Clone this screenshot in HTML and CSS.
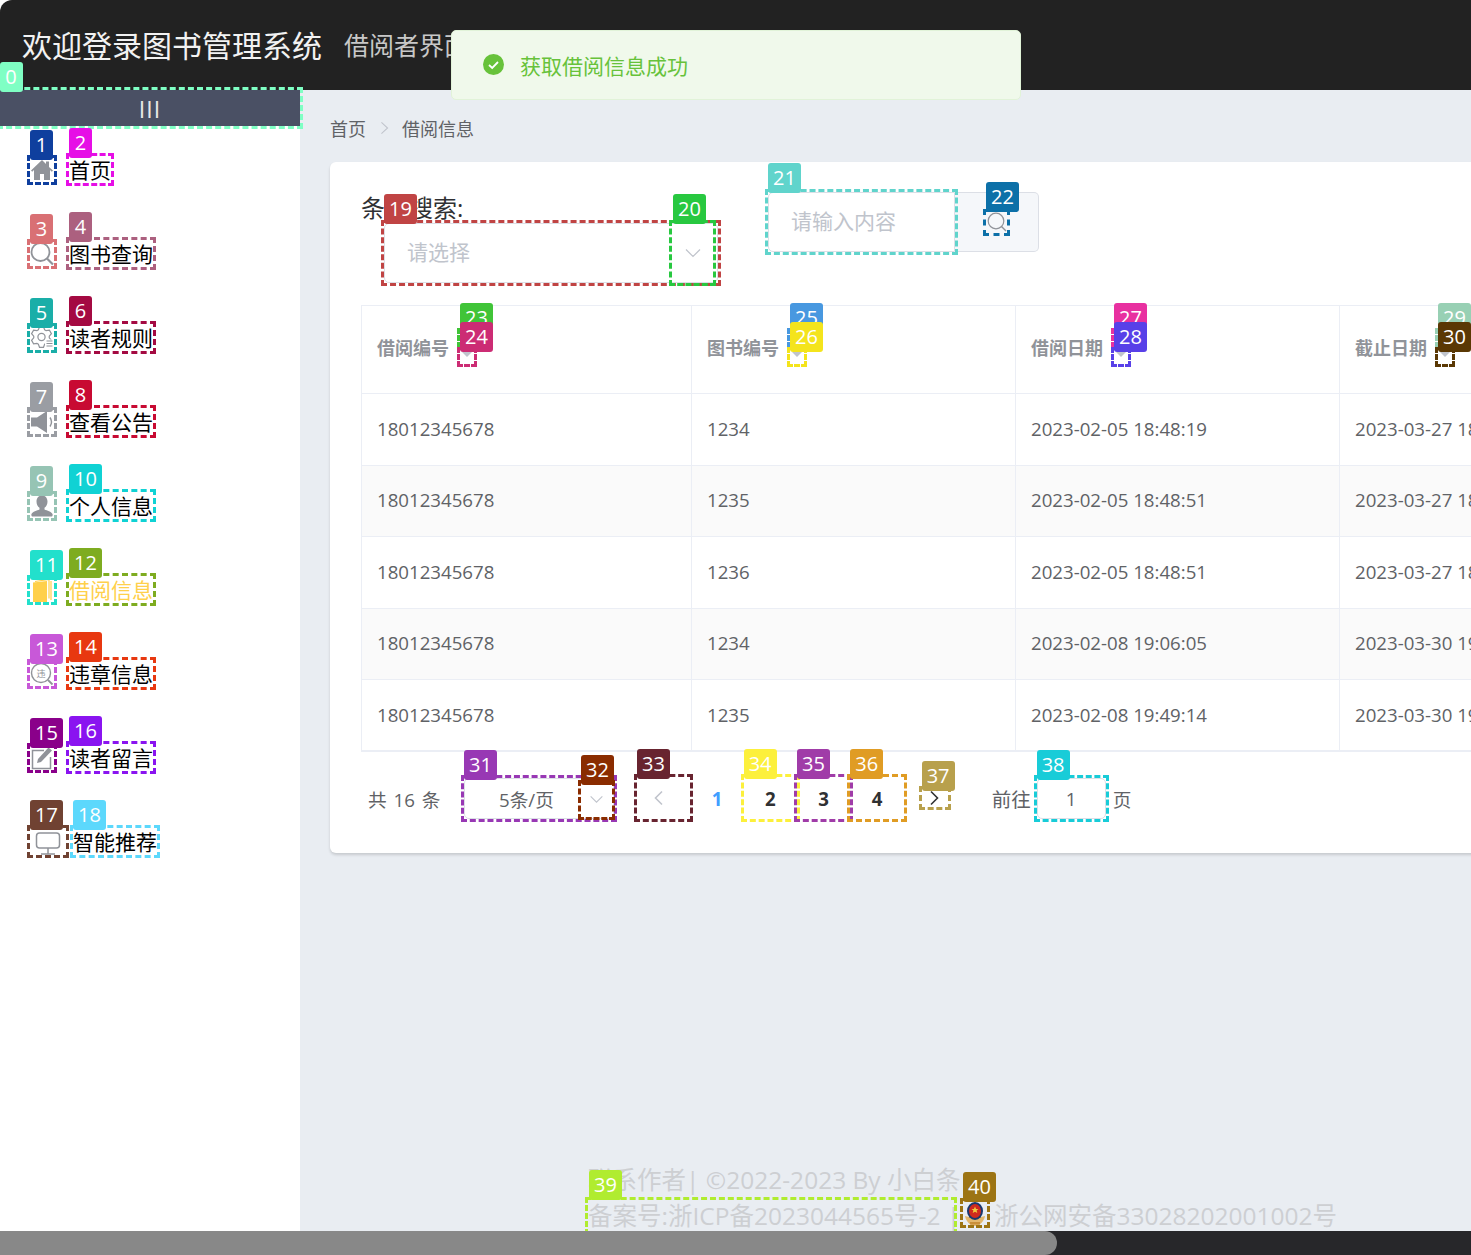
FILE: index.html
```html
<!DOCTYPE html>
<html lang="zh-CN">
<head>
<meta charset="utf-8">
<title>借阅信息</title>
<link rel="stylesheet" href="styles.css">
</head>
<body>
<div class="app">
  <header class="topbar">
    <h1 class="title">欢迎登录图书管理系统</h1>
    <span class="subtitle">借阅者界面</span>
  </header>
  <div class="toast">
    <svg class="toast-icon" viewBox="0 0 21 21"><circle cx="10.5" cy="10.5" r="10.5" fill="#67c23a"/><path d="M6 11l3.2 3L15 8" fill="none" stroke="#fff" stroke-width="1.8"/></svg>
    <span>获取借阅信息成功</span>
  </div>
  <div class="content">
    <aside class="sidebar">
      <div class="toggle ann a0"><i class="tag">0</i>III</div>
      <nav class="menu">
        <a class="item">
          <span class="ico ann a1"><i class="tag">1</i>
            <svg viewBox="0 0 24 24"><path d="M12 2L1 12.5l1.200 1.200L4 12v10h6v-6h4v6h6V12l1.800 1.700 1.200-1.200L19 9V3.500h-3V6z" fill="#909399"/></svg></span>
          <span class="txt ann a2"><i class="tag">2</i>首页</span>
        </a>
        <a class="item">
          <span class="ico ann a3"><i class="tag">3</i>
            <svg viewBox="0 0 24 24"><circle cx="10.500" cy="10" r="9" fill="none" stroke="#909399" stroke-width="1.800"/><path d="M17 16.500l6 6" stroke="#909399" stroke-width="2.200"/></svg></span>
          <span class="txt ann a4"><i class="tag">4</i>图书查询</span>
        </a>
        <a class="item">
          <span class="ico ann a5"><i class="tag">5</i>
            <svg viewBox="0 0 24 24"><path d="M8.330 3.870L9.500.690h4l1.170 3.180 1.410.820 3.340-.580 2.010 3.470-2.170 2.600v1.640l2.170 2.600-2.010 3.470-3.340-.580-1.410.820-1.170 3.180h-4l-1.170-3.180-1.410-.820-3.340.580-2.010-3.470 2.170-2.600v-1.640l-2.170-2.600 2.010-3.470 3.340.580z" fill="none" stroke="#909399" stroke-width="1.200"/><circle cx="11.500" cy="11" r="3.600" fill="none" stroke="#909399" stroke-width="1.200"/><path d="M15 13.500h9v10h-9z" fill="#fff"/><path d="M16.500 15h6M16.500 17.500h6M16.500 20h6" stroke="#909399" stroke-width="1.200"/></svg></span>
          <span class="txt ann a6"><i class="tag">6</i>读者规则</span>
        </a>
        <a class="item">
          <span class="ico ann a7"><i class="tag">7</i>
            <svg viewBox="0 0 24 24"><path d="M1 7.500h6L17 1v22L7 16.500H1z" fill="#909399"/><path d="M20 7.500c2 3 2 6 0 9" fill="none" stroke="#909399" stroke-width="1.400"/></svg></span>
          <span class="txt ann a8"><i class="tag">8</i>查看公告</span>
        </a>
        <a class="item">
          <span class="ico ann a9"><i class="tag">9</i>
            <svg viewBox="0 0 24 24"><path d="M12 1.500c3.600 0 5.500 2.800 5.500 6 0 2.600-1.200 5-3 6.300v1.700c2.500 1 7 2 8 4.500.3 1 .2 2-.5 2.500H2c-.7-.5-.8-1.500-.5-2.500 1-2.500 5.500-3.500 8-4.500v-1.700c-1.800-1.300-3-3.700-3-6.300 0-3.200 1.900-6 5.500-6z" fill="#909399"/></svg></span>
          <span class="txt ann a10"><i class="tag">10</i>个人信息</span>
        </a>
        <a class="item">
          <span class="ico ann a11"><i class="tag">11</i>
            <svg viewBox="0 0 24 24"><path d="M3 4.500L17 3v21H3z" fill="#ffd04b"/><path d="M5 3.500L19 1.500v19M21 3v19" fill="none" stroke="#ffd04b" stroke-width="1.200"/></svg></span>
          <span class="txt active ann a12"><i class="tag">12</i>借阅信息</span>
        </a>
        <a class="item">
          <span class="ico ann a13"><i class="tag">13</i>
            <svg viewBox="0 0 24 24"><circle cx="11" cy="11" r="9.500" fill="none" stroke="#909399" stroke-width="1.400"/><path d="M18 18l4.500 4.500" stroke="#909399" stroke-width="1.800"/><text class="mini" x="11" y="14.500" text-anchor="middle">违</text></svg></span>
          <span class="txt ann a14"><i class="tag">14</i>违章信息</span>
        </a>
        <a class="item">
          <span class="ico ann a15"><i class="tag">15</i>
            <svg viewBox="0 0 24 24"><path d="M14 4.500H2.500v18h18V11" fill="none" stroke="#909399" stroke-width="1.500"/><path d="M8 13L18.500 1.500l3.500 3L11 16l-4 1z" fill="#909399"/></svg></span>
          <span class="txt ann a16"><i class="tag">16</i>读者留言</span>
        </a>
        <a class="item last">
          <span class="ico wide ann a17"><i class="tag">17</i>
            <svg viewBox="0 0 36 27"><rect x="6.500" y="5" width="23" height="15" rx="3" fill="none" stroke="#909399" stroke-width="1.500"/><path d="M18 20v5.500M11 26h14" stroke="#909399" stroke-width="1.500"/></svg></span>
          <span class="txt ann a18"><i class="tag">18</i>智能推荐</span>
        </a>
      </nav>
    </aside>
    <main class="main">
      <div class="crumbs">
        <span>首页</span>
        <svg class="crumb-sep" viewBox="0 0 10 16"><path d="M1.500 1.500L8.500 8l-7 6.500" fill="none" stroke="#c0c4cc" stroke-width="1.200"/></svg>
        <span>借阅信息</span>
      </div>
      <section class="card">
        <div class="toolbar">
          <div class="cond">
            <span class="cond-label">条件搜索:</span>
            <div class="select ann a19"><i class="tag">19</i>
              <span class="placeholder">请选择</span>
              <span class="select-arrow ann a20"><i class="tag">20</i>
                <svg viewBox="0 0 16 10"><path d="M1 1.500l7 7 7-7" fill="none" stroke="#c0c4cc" stroke-width="1.200"/></svg></span>
            </div>
          </div>
          <div class="search">
            <div class="search-input ann a21"><i class="tag">21</i><span class="placeholder">请输入内容</span></div>
            <div class="search-btn">
              <span class="search-ico ann a22"><i class="tag">22</i>
                <svg viewBox="0 0 21 21"><circle cx="10" cy="9" r="7.800" fill="none" stroke="#909399" stroke-width="1.200"/><path d="M15.500 14.500l4.500 4.500" stroke="#909399" stroke-width="1.400"/></svg></span>
            </div>
          </div>
        </div>
        <table class="grid">
          <colgroup><col class="c1"><col class="c2"><col class="c3"><col class="c4"></colgroup>
          <thead>
            <tr>
              <th><div class="th"><span>借阅编号</span><span class="sorter"><span class="car ann a23"><i class="tag">23</i><b class="up"></b></span><span class="car ann a24"><i class="tag">24</i><b class="down"></b></span></span></div></th>
              <th><div class="th"><span>图书编号</span><span class="sorter"><span class="car ann a25"><i class="tag">25</i><b class="up"></b></span><span class="car ann a26"><i class="tag">26</i><b class="down"></b></span></span></div></th>
              <th><div class="th"><span>借阅日期</span><span class="sorter"><span class="car ann a27"><i class="tag">27</i><b class="up"></b></span><span class="car ann a28"><i class="tag">28</i><b class="down"></b></span></span></div></th>
              <th><div class="th"><span>截止日期</span><span class="sorter"><span class="car ann a29"><i class="tag">29</i><b class="up"></b></span><span class="car ann a30"><i class="tag">30</i><b class="down"></b></span></span></div></th>
            </tr>
          </thead>
          <tbody>
            <tr><td>18012345678</td><td>1234</td><td>2023-02-05 18:48:19</td><td>2023-03-27 18:48:19</td></tr>
            <tr><td>18012345678</td><td>1235</td><td>2023-02-05 18:48:51</td><td>2023-03-27 18:48:51</td></tr>
            <tr><td>18012345678</td><td>1236</td><td>2023-02-05 18:48:51</td><td>2023-03-27 18:48:51</td></tr>
            <tr><td>18012345678</td><td>1234</td><td>2023-02-08 19:06:05</td><td>2023-03-30 19:06:05</td></tr>
            <tr><td>18012345678</td><td>1235</td><td>2023-02-08 19:49:14</td><td>2023-03-30 19:49:14</td></tr>
          </tbody>
        </table>
        <div class="pager">
          <span class="total">共 16 条</span>
          <div class="size ann a31"><i class="tag">31</i>
            <span class="size-val">5条/页</span>
            <span class="size-arrow ann a32"><i class="tag">32</i>
              <svg viewBox="0 0 16 10"><path d="M1.500 1.500L8 8l6.500-6.500" fill="none" stroke="#c0c4cc" stroke-width="1.200"/></svg></span>
          </div>
          <span class="pg prev ann a33"><i class="tag">33</i>
            <svg viewBox="0 0 10 16"><path d="M8.500 1.500L2 8l6.500 6.500" fill="none" stroke="#c0c4cc" stroke-width="1.600"/></svg></span>
          <span class="pg current">1</span>
          <span class="pg ann a34"><i class="tag">34</i>2</span>
          <span class="pg ann a35"><i class="tag">35</i>3</span>
          <span class="pg ann a36"><i class="tag">36</i>4</span>
          <span class="next ann a37"><i class="tag">37</i>
            <svg viewBox="0 0 10 16"><path d="M1.500 1.500L8 8l-6.500 6.500" fill="none" stroke="#303133" stroke-width="1.600"/></svg></span>
          <span class="goto">前往</span>
          <span class="jump ann a38"><i class="tag">38</i>1</span>
          <span class="page-word">页</span>
        </div>
      </section>
      <footer class="foot">
        <div class="foot-line">联系作者| ©2022-2023 By 小白条</div>
        <div class="foot-line">
          <span class="record ann a39"><i class="tag">39</i>备案号:浙ICP备2023044565号-2 |</span>
          <span class="emblem ann a40"><i class="tag">40</i>
            <svg viewBox="0 0 24 26"><path d="M2 15c1 6 6 10 10 10s9-4 10-10l-4 1H6z" fill="#e3b76c"/><ellipse cx="12" cy="10" rx="8" ry="9" fill="#18386e"/><ellipse cx="12" cy="10" rx="6" ry="7" fill="#cf2a1e"/><path d="M12 5.500l1.100 2.500h2.400l-1.900 1.600.7 2.500-2.300-1.400-2.300 1.400.7-2.500L8.500 8h2.400z" fill="#f1c93e"/><path d="M7 21h10v2.500H7z" fill="#c98f3a"/></svg></span>
          <span class="police">浙公网安备33028202001002号</span>
        </div>
      </footer>
    </main>
  </div>
  <div class="hscroll"><div class="hthumb"></div></div>
</div>
</body>
</html>
```
FILE: styles.css
```css
* { box-sizing: border-box; }
html, body { margin: 0; padding: 0; height: 100%; overflow: hidden; background: #fff; }
body { font-family: "Open Sans", "Noto Sans CJK SC", sans-serif; color: #606266; }

.app { height: 1255px; display: flex; flex-direction: column; position: relative; overflow: hidden; border-top-left-radius: 12px; }

/* annotations */
.ann { position: relative; outline: 3px dashed var(--c); }
.tag { position: absolute; left: 0; top: -28px; height: 30px; min-width: 23px; padding: 0 5px; border-radius: 3px; background: var(--c); color: #fff; font: normal 20px/30px "Open Sans", sans-serif; text-align: center; z-index: 5; }
.a0{--c:#7fffc4}.a1{--c:#0f3f9e}.a2{--c:#e60ee6}.a3{--c:#d97074}.a4{--c:#ac607f}.a5{--c:#1aaea8}.a6{--c:#a40a42}.a7{--c:#9a9da3}.a8{--c:#c80a32}.a9{--c:#96c4b4}
.a10{--c:#10d2d4}.a11{--c:#22e0cc}.a12{--c:#7eac20}.a13{--c:#c858d8}.a14{--c:#e83810}.a15{--c:#8a008a}.a16{--c:#8a14f0}.a17{--c:#704232}.a18{--c:#5cd8fc}.a19{--c:#c04444}
.a20{--c:#28c840}.a21{--c:#60d4cc}.a22{--c:#0c70a8}.a23{--c:#40c438}.a24{--c:#cc2c74}.a25{--c:#4898e0}.a26{--c:#f4e41c}.a27{--c:#e830a0}.a28{--c:#5840e8}.a29{--c:#98d0b4}
.a30{--c:#5a3804}.a31{--c:#9838b4}.a32{--c:#8a2c00}.a33{--c:#682430}.a34{--c:#fcf03c}.a35{--c:#a03ca8}.a36{--c:#e09c24}.a37{--c:#b8a04c}.a38{--c:#18ccd8}.a39{--c:#b0ec30}.a40{--c:#9c7414}

/* header */
.topbar { flex: 0 0 90px; background: #222; display: flex; align-items: center; padding: 0 0 2px 22px; gap: 22px; white-space: nowrap; }
.title { margin: 0; font-size: 30px; font-weight: 400; color: #f2f2f2; }
.subtitle { font-size: 25px; color: #c8c8c8; }

.toast { position: absolute; left: 451px; top: 30px; width: 570px; height: 70px; display: flex; align-items: center; gap: 16px; padding: 0 0 1px 31px; background: #f0f9eb; border: 1px solid #e1f3d8; border-radius: 5px; color: #67c23a; font-size: 21px; z-index: 3; }
.toast-icon { width: 21px; height: 21px; }

.content { flex: 1; display: flex; min-height: 0; }

/* sidebar */
.sidebar { flex: 0 0 300px; background: #fff; }
.toggle { height: 36px; background: #4a5064; color: #e8e8e8; text-align: center; font-size: 23px; line-height: 38px; letter-spacing: 1px; }
.menu { padding: 30px 0 0 30px; display: flex; flex-direction: column; gap: 57px; }
.item { display: flex; align-items: center; gap: 15px; height: 27px; }
.item.last { gap: 7px; }
.ico { flex: none; width: 24px; height: 24px; display: flex; }
.ico.wide { width: 36px; height: 27px; }
.ico svg { width: 100%; height: 100%; }
.mini { font: 9px "Noto Sans CJK SC", sans-serif; fill: #909399; }
.txt { height: 27px; font-size: 21px; line-height: 29px; color: #000; font-weight: 400; white-space: nowrap; }
.txt.active { color: #ffd04b; }

/* main */
.main { flex: 1; min-width: 0; background: #e9edf2; overflow: hidden; padding-left: 30px; }
.crumbs { height: 72px; display: flex; align-items: center; font-size: 18px; color: #606266; padding-top: 4px; }
.crumb-sep { width: 9px; height: 14px; margin: 0 13px 0 14px; }

.card { width: 1400px; height: 691px; background: #fff; border-radius: 6px; box-shadow: 0 2px 3px rgba(0, 0, 0, .15); padding: 30px 0 0 31px; }
.toolbar { display: flex; gap: 50px; align-items: flex-start; margin-bottom: 22px; }
.cond { display: grid; width: 357px; }
.cond-label { grid-area: 1 / 1; font-size: 24px; line-height: 32px; color: #303133; white-space: nowrap; }
.select { grid-area: 1 / 1; margin: 31px 0 0 23px; height: 60px; display: flex; align-items: center; justify-content: space-between; padding-left: 23px; }
.select::before, .search-input::before, .size::before, .jump::before { content: ""; position: absolute; inset: 0; border: 1px solid #dcdfe6; border-radius: 5px; pointer-events: none; }
.search-input::before { border-radius: 5px 0 0 5px; }
.select > .tag, .search-input > .tag { top: -29px; }
.select-arrow > .tag { top: -29px; left: 1px; }
.search-ico > .tag { top: -30px; }
.placeholder { font-size: 21px; color: #c0c4cc; padding-bottom: 4px; }
.select-arrow { width: 41px; height: 60px; display: flex; align-items: center; justify-content: center; margin-right: 5px; }
.select-arrow svg { width: 16px; height: 10px; }
.search { display: flex; }
.search-input { width: 187px; height: 60px; display: flex; align-items: center; padding-left: 23px; background: #fff; }
.search-btn { width: 84px; height: 60px; display: flex; align-items: center; justify-content: center; background: #f5f7fa; border: 1px solid #dcdfe6; border-left: 0; border-radius: 0 5px 5px 0; }
.search-ico { width: 21px; height: 21px; display: flex; }
.search-ico svg { width: 100%; height: 100%; }

/* table */
.grid { width: 1340px; table-layout: fixed; border-collapse: separate; border-spacing: 0; border-top: 1px solid #ebeef5; border-left: 1px solid #ebeef5; border-bottom: 2px solid #ebeef5; }
.c1 { width: 330px; } .c2, .c3 { width: 324px; }
.grid th, .grid td { padding: 0 0 0 15px; border-right: 1px solid #ebeef5; border-bottom: 1px solid #ebeef5; text-align: left; white-space: nowrap; overflow: hidden; }
.grid thead tr { height: 88px; }
.grid tbody tr { height: 71.500px; }
.grid tbody tr:last-child { height: 70px; }
.grid tbody tr:nth-child(even) td { background: #fafafa; }
.grid tbody tr:last-child td { border-bottom: 0; }
.grid td { font-size: 18.670px; color: #606266; padding-bottom: 2px; }
.grid th { overflow: visible; padding-bottom: 6px; }
.th { display: flex; align-items: center; gap: 11px; font-size: 18px; font-weight: 700; color: #909399; }
.sorter { display: flex; flex-direction: column; gap: 5px; margin-top: 2px; }
.car { width: 14px; height: 14px; display: flex; justify-content: center; }
.up, .down { width: 0; height: 0; border: 5.500px solid transparent; }
.up { border-bottom-color: #c0c4cc; margin-top: -4px; }
.down { border-top-color: #c0c4cc; margin-top: 2px; }

/* pagination */
.pager { display: flex; align-items: center; height: 42px; margin-top: 25px; padding-left: 7px; font-size: 18.670px; color: #606266; white-space: nowrap; }
.total { width: 96px; word-spacing: 2px; }
.size { width: 150px; height: 41px; align-self: flex-end; display: flex; align-items: center; justify-content: space-between; padding-left: 35px; margin-right: 23px; }
.size-arrow { width: 31px; height: 34px; display: flex; align-items: center; justify-content: center; margin: 2px 2px 0 0; }
.size-arrow svg { width: 15px; height: 9px; }
.pg { width: 53.330px; height: 42px; display: flex; align-items: center; justify-content: center; font-weight: 700; color: #303133; }
.pg.current { color: #409eff; }
.pg.prev { padding-right: 11px; }
.prev svg, .next svg { width: 11px; height: 16px; }
.next { width: 26px; height: 18px; display: flex; align-items: center; justify-content: center; margin-left: 18px; }
.goto { margin-left: 44px; width: 45px; font-size: 19.500px; }
.jump { width: 69px; height: 41px; align-self: flex-end; display: flex; align-items: center; justify-content: center; color: #606266; }
.page-word { margin-left: 7px; }

/* footer */
.foot { margin-top: 309px; padding-left: 258px; font-size: 24.500px; line-height: 36px; color: #cdcfd2; white-space: nowrap; }
.foot-line { display: flex; align-items: flex-start; }
.record { height: 40px; width: 366px; margin-top: 2px; line-height: 32px; white-space: nowrap; }
.record > .tag { top: -30px; left: 1px; }
.emblem { width: 24px; height: 24px; margin: 3px 7px 0 9px; display: flex; }
.emblem > .tag { top: -29px; }
.emblem svg { width: 24px; height: 26px; flex: none; }
.police { line-height: 36px; }

/* horizontal scrollbar */
.hscroll { flex: 0 0 24px; background: #27272a; z-index: 6; }
.hthumb { width: 1057px; height: 24px; background: #888; border-radius: 0 12px 12px 0; }
```
